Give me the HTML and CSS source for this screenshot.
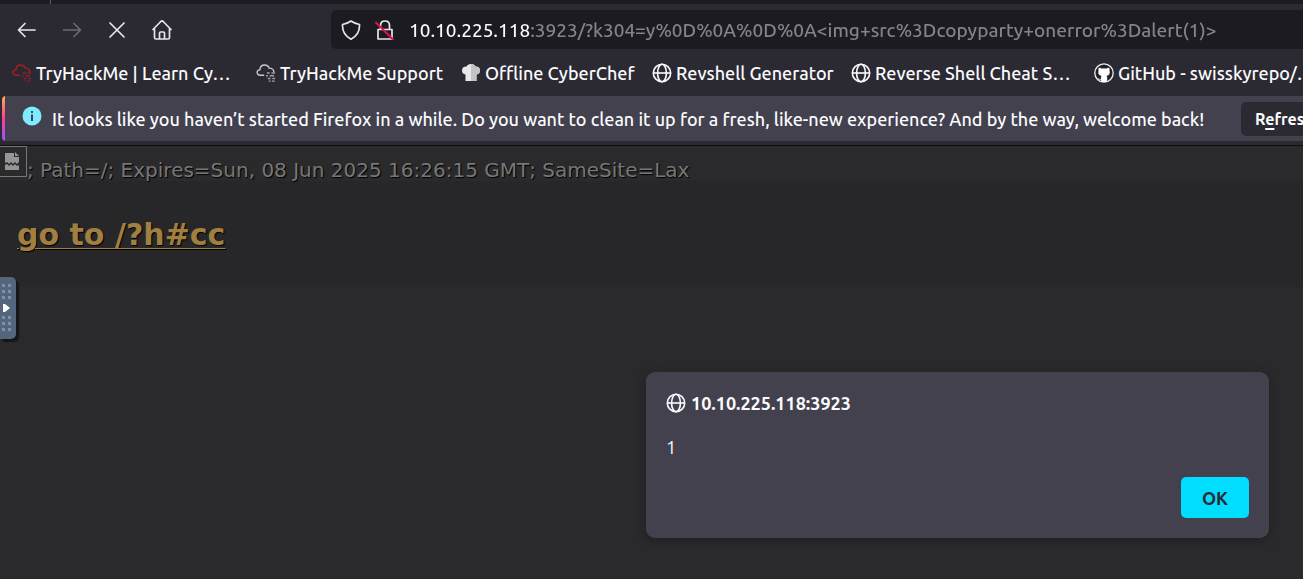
FILE: index.html
```html
<!DOCTYPE html>
<html lang="en">
<head>
<meta charset="utf-8">
<title>10.10.225.118:3923</title>
<link rel="stylesheet" href="styles.css">
</head>
<body>
<svg class="defs" aria-hidden="true">
  <symbol id="globe" viewBox="0 0 20 20"><g fill="none" stroke="currentColor" stroke-width="1.6"><circle cx="10" cy="10" r="8.7"/><ellipse cx="10" cy="10" rx="4.4" ry="8.7"/><path d="M1.3 10h17.4"/></g></symbol>
  <symbol id="cloud" viewBox="0 0 22 22"><path d="M9 13.5H4.5C2.600 13.500 1.200 12.200 1.200 10.500S2.500 7.500 4.300 7.500C4.500 4 6.700 2.200 9.500 2.200c2.500 0 4.300 1.200 5 3.500 3 0 5 1.600 5.200 4.300" fill="none" stroke="currentColor" stroke-width="1.500"/><path d="M12 11h3M17 11h4M11 14h2M15 14h5M13 17h3M18 17h3M14 20h2M17.500 20h3" stroke="currentColor" stroke-width="1.500" opacity=".75"/></symbol>
</svg>
<header class="chrome">
  <div class="tabstrip"><span class="tab-edge"></span></div>
  <nav class="toolbar" aria-label="Navigation">
    <div class="nav-buttons">
      <button class="nav-button" aria-label="Back"><svg viewBox="0 0 20 20"><path d="M18 10H2M8 3.500 1.500 10 8 16.500"/></svg></button>
      <button class="nav-button dim" aria-label="Forward"><svg viewBox="0 0 20 20"><path d="M1.500 10h17M12 3.500l6.500 6.500-6.500 6.500"/></svg></button>
      <button class="nav-button" aria-label="Stop"><svg viewBox="0 0 20 20"><path d="m3 3 14 14M17 3 3 17"/></svg></button>
      <button class="nav-button" aria-label="Home"><svg viewBox="0 0 20 20"><path d="M1 9.500 8.800 1.500q1.200-1 2.400 0L19 9.500M2.500 8.500v9q0 1.500 1.500 1.500h12q1.500 0 1.500-1.500v-9M7.500 19v-6q0-1 1-1h3q1 0 1 1v6"/></svg></button>
    </div>
    <div class="urlbar">
      <svg class="url-icon" viewBox="0 0 20 20"><path d="M10 1q4 2.800 8.500 3.500.5 10-8.500 14.700Q1 14.500 1.500 4.500 6 3.800 10 1z"/></svg>
      <svg class="url-icon" viewBox="0 0 20 20"><path d="M3 9.500h14v9.500H3zM5.500 9.500V5.500q0-4.500 4.500-4.500t4.500 4.500v4"/><path class="slash" d="m1 2.500 17 17"/></svg>
      <input class="address" type="text" aria-label="Address" value="10.10.225.118:3923/?k304=y%0D%0A%0D%0A&lt;img+src%3Dcopyparty+onerror%3Dalert(1)&gt;">
    </div>
  </nav>
  <nav class="bookmarks" aria-label="Bookmarks">
    <a href="#"><svg class="red"><use href="#cloud"/></svg>TryHackMe | Learn Cy…</a>
    <a href="#"><svg class="grey"><use href="#cloud"/></svg>TryHackMe Support</a>
    <a href="#"><svg viewBox="0 0 20 20"><path d="M4.500 18v-6.500Q1 11 1 7.500 1 3.500 5.500 3.500 6.500 1 10 1t4.500 2.500Q19 3.500 19 7.500q0 3.500-3.500 4V18z" fill="#e8e8e8"/><path d="M10 1q3.500 0 4.500 2.500Q19 3.500 19 7.500q0 3.500-3.500 4V18H10z" fill="#c4c4c4"/></svg>Offline CyberChef</a>
    <a href="#"><svg><use href="#globe"/></svg>Revshell Generator</a>
    <a href="#"><svg><use href="#globe"/></svg>Reverse Shell Cheat S…</a>
    <a href="#"><svg viewBox="0 0 20 20"><circle cx="10" cy="10" r="9.200" fill="#222128" stroke="#eee" stroke-width="1.300"/><path d="M5 4.500 7.500 5.500h5L15 4.500q1 1.500.5 3 1 4.500-3 5.500.7.700.7 2v3.500q-3.200 1-6.400 0V17Q4.500 17.200 4 15q1 .2 1.500 1t1.300.3q.1-2.300.7-3.300-4-1-3-5.500-.5-1.500.5-3z" fill="#fff"/></svg>GitHub - swisskyrepo/…</a>
  </nav>
  <section class="notice">
    <svg class="info" viewBox="0 0 20 20"><circle cx="10" cy="10" r="9.500" fill="#80ebff"/><path d="M10 5v2M10 8.500V15" stroke="#3b4350" stroke-width="2"/></svg>
    <p>It looks like you haven’t started Firefox in a while. Do you want to clean it up for a fresh, like-new experience? And by the way, welcome back!</p>
    <button class="refresh">R<u>e</u>fresh</button>
  </section>
</header>
<main class="page">
  <div class="response"><svg class="broken" viewBox="0 0 27 32" role="img" aria-label="Broken image"><path d="M0 .500h26.500v30H0" fill="none" stroke="#777" stroke-width="1"/><path d="M5 7h9v4h5v5l-2 2-2-2-2 2-2-2-2 2-2-2-2 1zM15 6l4 4h-4zM5 19l2-1 2 2 2-2 2 2 2-2 2 2 2-1v5H5z" fill="#969696"/></svg><span>; Path=/; Expires=Sun, 08 Jun 2025 16:26:15 GMT; SameSite=Lax</span></div>
  <h1><a href="#">go to /?h#cc</a></h1>
  <button class="handle" aria-label="Open side panel"><svg viewBox="0 0 16 62"><path d="M3.500 7v15M9.500 7v15M3.500 39v15M9.500 39v15" stroke="#8190a6" stroke-width="3" stroke-dasharray="3 3"/><path d="M3 27h2l5 4-5 4H3z" fill="#fff"/></svg></button>
  <dialog class="alert" open aria-labelledby="origin">
    <h2 id="origin"><svg><use href="#globe"/></svg>10.10.225.118:3923</h2>
    <p>1</p>
    <button class="ok">OK</button>
  </dialog>
</main>
</body>
</html>
```
FILE: styles.css
```css
* { box-sizing: border-box; }
body {
  margin: 0;
  min-height: 100vh;
  display: flex;
  flex-direction: column;
  overflow: hidden;
  background: #2a2a2c;
  color: #fbfbfe;
  font-family: Ubuntu, "Noto Sans", sans-serif;
  font-size: 18px;
  font-weight: 500;
}
button { border: 0; padding: 0; font: inherit; color: inherit; }
.defs { position: absolute; width: 0; height: 0; }
.chrome { background: #2b2a33; border-bottom: 1px solid #0c0c0d; }
.tabstrip { height: 4px; background: #1c1b22; }
.tab-edge { display: block; width: 1px; height: 4px; margin-left: 50px; background: #5b5b66; }

.toolbar { display: flex; padding: 6px 0 5px 17px; overflow: hidden; }
.nav-buttons { display: flex; align-items: center; gap: 25px; flex: 0 0 314px; }
.nav-button { width: 20px; height: 20px; background: none; }
.nav-button svg, .url-icon {
  display: block;
  width: 20px;
  height: 20px;
  fill: none;
  stroke: #e6e6ea;
  stroke-width: 1.7;
  stroke-linecap: round;
  stroke-linejoin: round;
}
.dim svg { stroke: #6b6a73; }
.urlbar {
  flex: 1;
  display: flex;
  align-items: center;
  gap: 14px;
  height: 39px;
  padding-left: 10px;
  border-radius: 5px 0 0 5px;
  background: #1c1b22;
}
.url-icon { flex: none; }
.url-icon .slash { stroke: #e2104b; stroke-width: 2; }
.address {
  flex: 1;
  min-width: 0;
  height: 28px;
  padding: 0;
  border: 0;
  outline: 0;
  font: inherit;
  font-size: 19px;
  color: transparent;
  background: linear-gradient(90deg, #fbfbfe 122px, #85848c 122px) text;
}

.bookmarks {
  display: grid;
  grid-template-columns: 244px 205px 191px 199px 243px 1fr;
  height: 42px;
  padding: 0 0 5px 12px;
  overflow: hidden;
}
.bookmarks a {
  display: flex;
  align-items: center;
  gap: 4px;
  color: inherit;
  text-decoration: none;
  white-space: nowrap;
}
.bookmarks svg { flex: none; width: 20px; height: 20px; }
.bookmarks .red { color: #b01b20; }
.bookmarks .grey { color: #c8c8cc; }

.notice {
  display: flex;
  align-items: center;
  height: 45px;
  margin: 0 0 4px 2px;
  padding-left: 20px;
  overflow: hidden;
  background: linear-gradient(#ffae4a, #ff3c99 50%, #9059ff) 0 0 / 3px 100% no-repeat #42414d;
  border-radius: 4px 0 0 4px;
}
.info { flex: none; width: 20px; height: 20px; margin: 0 10px 5px 0; }
.notice p { flex: 0 0 1189px; margin: 0; white-space: nowrap; }
.refresh {
  flex: none;
  height: 34px;
  padding: 0 14px;
  border-radius: 5px;
  background: #2b2a33;
  font-size: 16px;
  font-weight: 700;
}
.refresh u { text-underline-offset: 3px; text-decoration-thickness: 2px; }

.page {
  position: relative;
  flex: 1;
  font-family: "DejaVu Sans", sans-serif;
  font-weight: 400;
  background: linear-gradient(#272729, #272729) 0 35px / 100% 106px no-repeat #2a2a2c;
}
.response {
  display: flex;
  align-items: flex-start;
  height: 35px;
  font-size: 20px;
  line-height: 48px;
  white-space: nowrap;
  color: #777;
  text-shadow: 1px 1px 1px #000;
}
.broken { flex: none; width: 27px; height: 32px; }
.page h1 { margin: 30px 0 0 17px; font-size: 30px; line-height: 48px; }
.page h1 a { color: #a17f40; text-shadow: 1px 1px 1px #000; text-decoration-thickness: 1px; text-underline-offset: 3px; }
.handle {
  position: absolute;
  left: 0;
  top: 131px;
  width: 16px;
  height: 62px;
  border-radius: 0 5px 5px 0;
  background: #54657e;
  box-shadow: 3px 3px 1px #161617;
}
.handle svg { display: block; width: 16px; height: 62px; }

.alert {
  position: absolute;
  inset: 226px 34px auto auto;
  display: flex;
  flex-direction: column;
  width: 623px;
  margin: 0;
  padding: 18px 20px 20px;
  border: 0;
  border-radius: 9px;
  background: #42414d;
  color: #fbfbfe;
  box-shadow: 0 2px 8px #202022;
  font-family: Ubuntu, "Noto Sans", sans-serif;
}
.alert h2 { display: flex; align-items: center; gap: 5px; margin: 0; font-size: 18px; line-height: 26px; }
.alert h2 svg { width: 20px; height: 20px; }
.alert p { margin: 18px 0 17px; line-height: 26px; }
.ok {
  align-self: flex-end;
  width: 68px;
  height: 41px;
  border-radius: 5px;
  background: #00ddff;
  color: #2b2a33;
  font-weight: 700;
}
```
